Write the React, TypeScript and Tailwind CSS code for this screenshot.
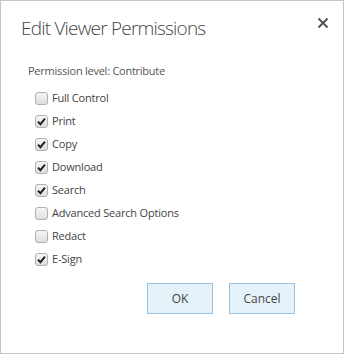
import React from "react";

const items: [string, boolean][] = [
  ["Full Control", false],
  ["Print", true],
  ["Copy", true],
  ["Download", true],
  ["Search", true],
  ["Advanced Search Options", false],
  ["Redact", false],
  ["E-Sign", true],
];

function Box({ checked }: { checked: boolean }) {
  return (
    <span className="flex h-[13px] w-[13px] shrink-0 items-center justify-center rounded-[3px] border border-[#b0b0b0] bg-gradient-to-b from-[#f6f6f6] to-[#dedede]">
      {checked && (
        <svg width="9" height="9" viewBox="0 0 9 9">
          <path d="M1 4.6 L3.4 7.2 L8 1.6" fill="none" stroke="#222" strokeWidth="2" />
        </svg>
      )}
    </span>
  );
}

export default function App() {
  return (
    <div
      className="relative h-[354px] w-[344px] border border-[#c6c6c6] bg-white text-[#444]"
      style={{ fontFamily: '"Open Sans", "Noto Sans", "Liberation Sans", sans-serif' }}
    >
      <div className="flex items-start justify-between pl-[20px] pr-[14px] pt-[13px]">
        <h1 className="text-[19px] font-light leading-[28px] tracking-[-0.8px] text-[#444]">Edit Viewer Permissions</h1>
        <svg width="12" height="12" viewBox="0 0 12 12" className="mt-[3px]">
          <path d="M1.5 1.5 L10.5 10.5 M10.5 1.5 L1.5 10.5" stroke="#555" strokeWidth="2" />
        </svg>
      </div>
      <div className="pl-[27px] pt-[21px] text-[11px] leading-[16px] tracking-[-0.25px] text-[#555]">Permission level: Contribute</div>
      <div className="flex flex-col gap-[7px] pl-[34px] pt-[11px]">
        {items.map(([label, checked]) => (
          <div key={label} className="flex h-[16px] items-center gap-[4px] text-[11px] tracking-[-0.2px] text-[#444]">
            <Box checked={checked} />
            <span>{label}</span>
          </div>
        ))}
      </div>
      <div className="flex justify-end gap-[16px] pr-[48px] pt-[16px]">
        <button className="h-[31px] w-[66px] border border-[#9cc4e4] bg-[#e6f2fa] text-[12px] text-[#444]">OK</button>
        <button className="h-[31px] w-[66px] border border-[#9cc4e4] bg-[#e6f2fa] text-[12px] text-[#444]">Cancel</button>
      </div>
    </div>
  );
}
